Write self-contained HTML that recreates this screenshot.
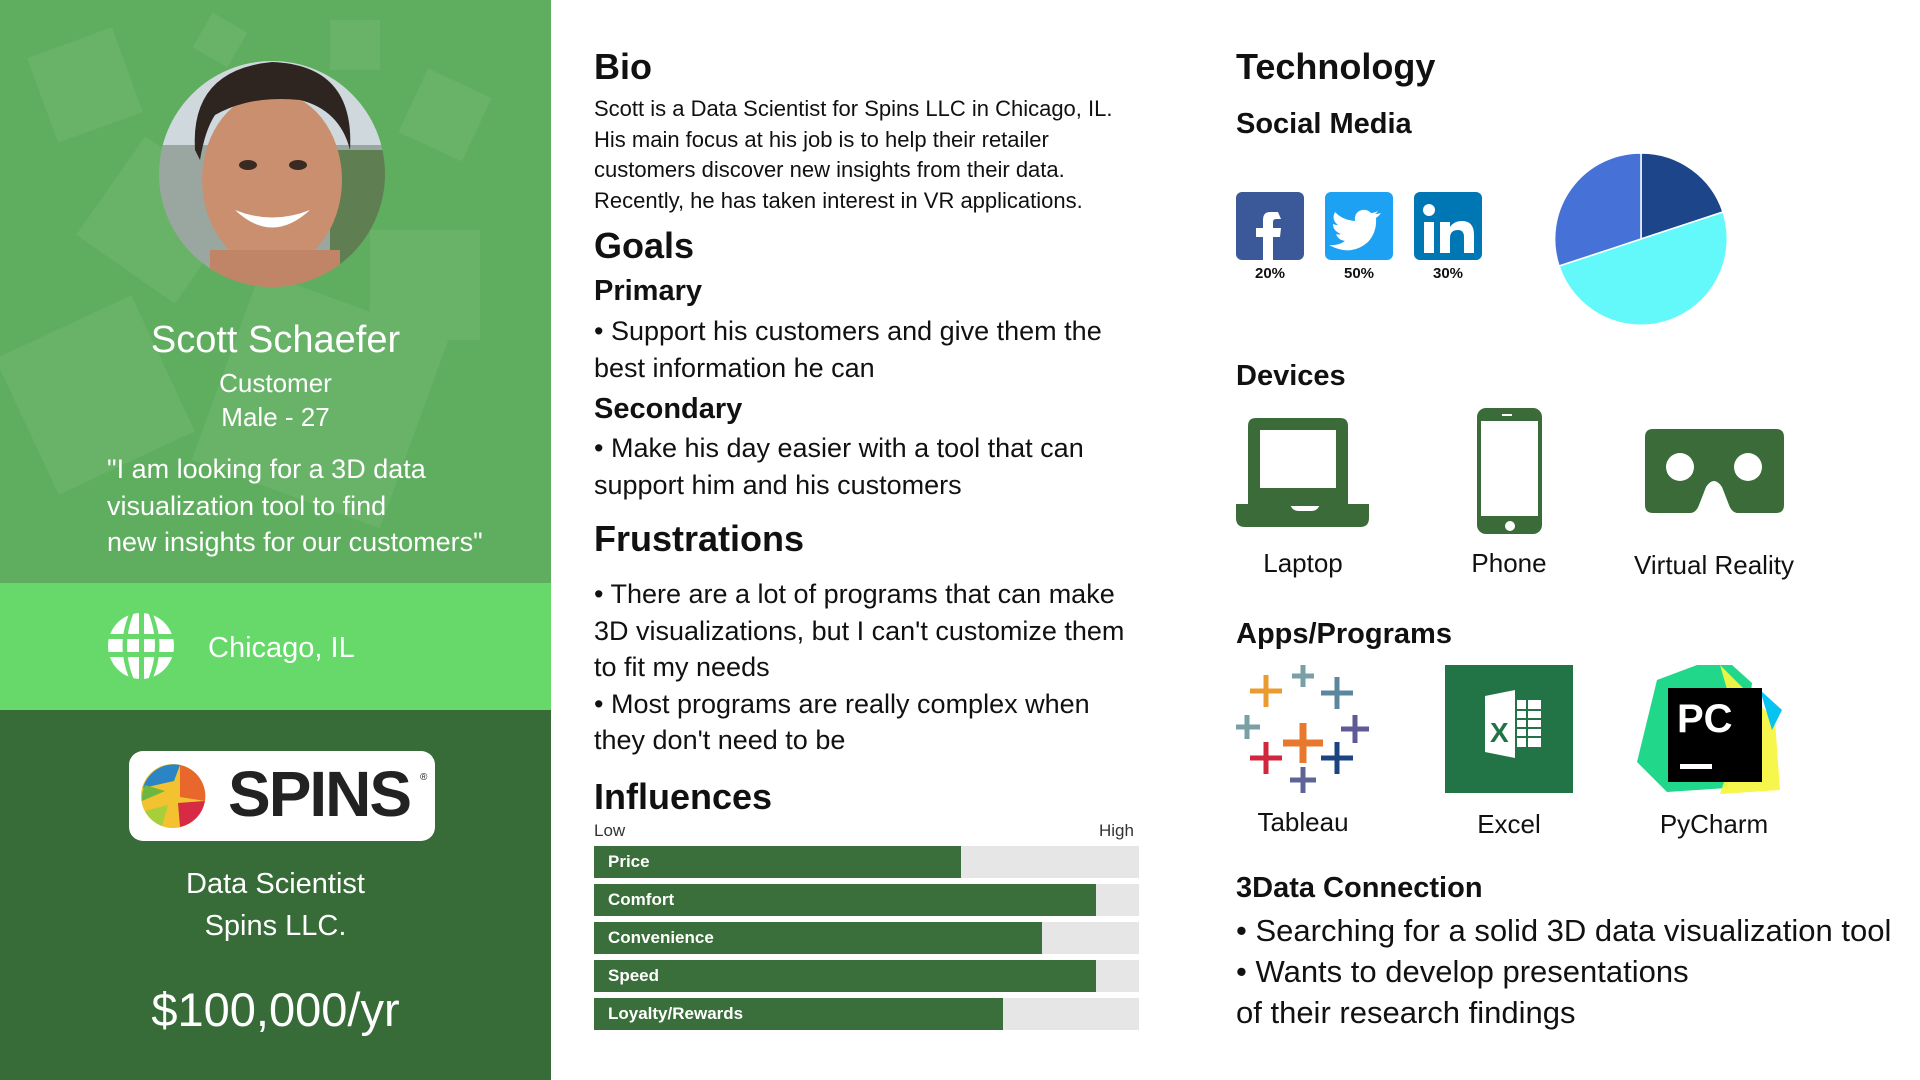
<!DOCTYPE html>
<html><head><meta charset="utf-8"><style>
*{margin:0;padding:0;box-sizing:border-box}
body{width:1920px;height:1080px;position:relative;overflow:hidden;background:#fff;font-family:"Liberation Sans",sans-serif;color:#111}
.a{position:absolute;white-space:nowrap}
.w{color:#fff}
.h1{font-size:36px;font-weight:bold;line-height:44px}
.h2{font-size:29px;font-weight:bold;line-height:36px}
.t{font-size:22px;line-height:30.5px}
.b{font-size:27px;line-height:36.5px}
.bar{position:absolute;left:594px;width:545px;height:32px;background:#e6e6e6}
.bar div{height:32px;background:#3a6e3a;color:#fff;font-size:17px;font-weight:bold;line-height:32px;padding-left:14px}
.c{text-align:center}
</style></head><body>
<svg class="a" style="left:0;top:0" width="1920" height="1080">
<rect x="0" y="0" width="551" height="583" fill="#5fae5f"/>
<g fill="#fff" opacity="0.07">
<rect x="40" y="40" width="90" height="90" transform="rotate(-20 85 85)"/>
<rect x="330" y="20" width="50" height="50"/>
<rect x="410" y="80" width="70" height="70" transform="rotate(25 445 115)"/>
<rect x="100" y="160" width="120" height="120" transform="rotate(35 160 220)"/>
<rect x="370" y="230" width="110" height="110"/>
<rect x="20" y="320" width="150" height="150" transform="rotate(-25 95 395)"/>
<rect x="220" y="300" width="200" height="200" transform="rotate(20 320 400)"/>
<rect x="200" y="20" width="40" height="40" transform="rotate(30 220 40)"/>
</g>
<rect x="0" y="583" width="551" height="127" fill="#66d96a"/>
<rect x="0" y="710" width="551" height="370" fill="#376b38"/>
<defs><clipPath id="cp"><circle cx="272" cy="174" r="113"/></clipPath></defs>
<g clip-path="url(#cp)">
<rect x="150" y="55" width="250" height="240" fill="#9aa7a0"/>
<rect x="150" y="55" width="250" height="90" fill="#cfd9dd"/>
<rect x="330" y="150" width="80" height="140" fill="#5f7e52"/>
<ellipse cx="272" cy="180" rx="70" ry="88" fill="#c98f6f"/>
<path d="M195 150 Q190 70 272 62 Q355 65 350 150 Q340 110 300 100 Q250 95 215 115 Q205 130 200 160Z" fill="#2e2520"/>
<rect x="210" y="250" width="130" height="60" fill="#c08566"/>
<path d="M235 210 Q272 245 310 210 Q272 225 235 210Z" fill="#fff"/>
<ellipse cx="248" cy="165" rx="9" ry="5" fill="#3a2a22"/><ellipse cx="298" cy="165" rx="9" ry="5" fill="#3a2a22"/>
</g>
<circle cx="141" cy="646" r="33" fill="#fff"/>
<g fill="#66d96a">
<rect x="104" y="634" width="76" height="5"/><rect x="104" y="652" width="76" height="5"/>
<path d="M130 612 Q115 646 130 680 L134 680 Q120 646 134 612Z"/>
<path d="M152 612 Q167 646 152 680 L148 680 Q162 646 148 612Z"/>
<rect x="139" y="610" width="5" height="72"/>
</g>
<rect x="129" y="751" width="306" height="90" rx="14" fill="#fff"/>
<g transform="translate(140,763)">
<circle cx="33" cy="33" r="32" fill="#f2c230"/>
<path d="M3 25 A32 32 0 0 1 40 2 L34 18 Z" fill="#2b84c6"/>
<path d="M2 38 A32 32 0 0 1 5 22 L25 28 Z" fill="#6cb73f"/>
<path d="M40 2 A32 32 0 0 1 65 38 L40 34Z" fill="#e8672a"/>
<path d="M65 38 A32 32 0 0 1 40 64 L38 40Z" fill="#d62a45"/>
<path d="M5 48 A32 32 0 0 0 22 63 L28 42Z" fill="#a6cf3a"/>
</g>
<text x="228" y="816" font-family="Liberation Sans" font-weight="bold" font-size="64" fill="#222" letter-spacing="-2">SPINS</text>
<text x="420" y="780" font-size="10" fill="#222" font-family="Liberation Sans">®</text>
<rect x="1236" y="192" width="68" height="68" rx="6" fill="#3b5998"/>
<path d="M1278 212 h-8 q-7 0 -7 8 v8 h-7 v9 h7 v23 h10 v-23 h7 l1 -9 h-8 v-6 q0 -3 3 -3 h5z" fill="#fff"/>
<rect x="1325" y="192" width="68" height="68" rx="6" fill="#1da1f2"/>
<path d="M1378 211 q-4 2 -7 2 q-4 -4 -9 -3 q-8 2 -7 11 q-13 -1 -20 -9 q-4 8 3 13 q-3 0 -5 -1 q0 7 8 10 q-3 1 -5 0 q2 6 9 7 q-7 5 -16 4 q22 12 39 -3 q9 -10 8 -24 q3 -2 5 -5 q-3 1 -6 1 q3 -2 3 -4z" fill="#fff"/>
<rect x="1414" y="192" width="68" height="68" rx="6" fill="#0077b5"/>
<g fill="#fff"><rect x="1424" y="222" width="10" height="31"/><circle cx="1429" cy="210" r="6"/>
<path d="M1440 222 h10 v5 q4 -6 12 -6 q12 0 12 14 v18 h-10 v-16 q0 -7 -6 -7 q-8 0 -8 8 v15 h-10z"/></g>
<path d="M1641 239 L1641 153 A86 86 0 0 1 1723 212Z" fill="#1d4589" stroke="#fff" stroke-width="1.5"/>
<path d="M1641 239 L1723 212 A86 86 0 0 1 1559 266Z" fill="#63f8fa" stroke="#fff" stroke-width="1.5"/>
<path d="M1641 239 L1559 266 A86 86 0 0 1 1641 153Z" fill="#4672d8" stroke="#fff" stroke-width="1.5"/>
<g fill="#3a6b38">
<path d="M1256 418 h84 q8 0 8 8 v80 h-100 v-80 q0 -8 8 -8z"/>
<rect x="1260" y="430" width="76" height="58" fill="#fff"/>
<path d="M1236 504 h54 q2 7 9 7 h12 q7 0 9 -7 h49 v14 q0 9 -9 9 h-115 q-9 0 -9 -9z"/>
<rect x="1477" y="408" width="65" height="126" rx="9"/>
<rect x="1481" y="421" width="57" height="95" fill="#fff"/>
<rect x="1502" y="414" width="10" height="2" fill="#fff"/>
<circle cx="1510" cy="526" r="5" fill="#fff"/>
<path d="M1653 429 H1776 Q1784 429 1784 437 V505 Q1784 513 1776 513 H1738 Q1732 513 1729 505 L1722 487 Q1714 475 1706 487 L1699 505 Q1696 513 1690 513 H1653 Q1645 513 1645 505 V437 Q1645 429 1653 429Z"/>
<circle cx="1680" cy="467" r="14" fill="#fff"/><circle cx="1748" cy="467" r="14" fill="#fff"/>
</g>
<g stroke-width="5">
<path d="M1303 723 v40 M1283 743 h40" stroke="#e8782d" stroke-width="7"/>
<path d="M1266 675 v32 M1250 691 h32" stroke="#eb9b2f"/>
<path d="M1337 677 v32 M1321 693 h32" stroke="#5b879e"/>
<path d="M1303 665 v22 M1292 676 h22" stroke="#7a9fa4"/>
<path d="M1247 715 v24 M1236 727 h24" stroke="#7a9fa4"/>
<path d="M1355 715 v28 M1341 729 h28" stroke="#5e5a96"/>
<path d="M1266 742 v32 M1250 758 h32" stroke="#d0263e"/>
<path d="M1337 742 v32 M1321 758 h32" stroke="#1d4482"/>
<path d="M1303 767 v26 M1290 780 h26" stroke="#5e6595"/>
</g>
<rect x="1445" y="665" width="128" height="128" fill="#227446"/>
<path d="M1485 696 l30 -6 v68 l-30 -6z" fill="#fff"/>
<rect x="1517" y="700" width="24" height="47" fill="#fff"/>
<g stroke="#227446" stroke-width="2"><path d="M1517 710 h24 M1517 719 h24 M1517 728 h24 M1517 737 h24 M1527 700 v47"/></g>
<text x="1490" y="742" font-family="Liberation Sans" font-weight="bold" font-size="28" fill="#227446">X</text>
<path d="M1657 680 l40 -15 l35 0 l20 18 l-5 45 l-20 60 l-60 4 l-30 -30z" fill="#21d789"/>
<path d="M1720 665 l55 55 l5 70 l-60 4 l20 -60z" fill="#f5f542" opacity="0.95"/>
<path d="M1760 690 l22 20 l-10 20z" fill="#07c3f2"/>
<rect x="1668" y="688" width="94" height="94" fill="#000"/>
<text x="1677" y="732" font-family="Liberation Sans" font-weight="bold" font-size="40" fill="#fff">PC</text>
<rect x="1680" y="764" width="32" height="5" fill="#fff"/>
</svg>

<div class="a w c" style="left:0;width:551px;top:318px;font-size:38px;line-height:44px">Scott Schaefer</div>
<div class="a w c" style="left:0;width:551px;top:367px;font-size:26px;line-height:32px">Customer</div>
<div class="a w c" style="left:0;width:551px;top:401px;font-size:26px;line-height:32px">Male - 27</div>
<div class="a w" style="left:107px;top:451px;font-size:27px;line-height:36.5px">"I am looking for a 3D data<br>visualization tool to find<br>new insights for our customers"</div>
<div class="a w" style="left:208px;top:630px;font-size:29px;line-height:36px">Chicago, IL</div>
<div class="a w c" style="left:0;width:551px;top:866px;font-size:29px;line-height:36px">Data Scientist</div>
<div class="a w c" style="left:0;width:551px;top:908px;font-size:29px;line-height:36px">Spins LLC.</div>
<div class="a w c" style="left:0;width:551px;top:980px;font-size:47px;line-height:60px">$100,000/yr</div>

<div class="a h1" style="left:594px;top:45px">Bio</div>
<div class="a t" style="left:594px;top:94px">Scott is a Data Scientist for Spins LLC in Chicago, IL.<br>His main focus at his job is to help their retailer<br>customers discover new insights from their data.<br>Recently, he has taken interest in VR applications.</div>
<div class="a h1" style="left:594px;top:224px">Goals</div>
<div class="a h2" style="left:594px;top:273px">Primary</div>
<div class="a b" style="left:594px;top:313px">• Support his customers and give them the<br>best information he can</div>
<div class="a h2" style="left:594px;top:391px">Secondary</div>
<div class="a b" style="left:594px;top:430px">• Make his day easier with a tool that can<br>support him and his customers</div>
<div class="a h1" style="left:594px;top:517px">Frustrations</div>
<div class="a b" style="left:594px;top:576px">• There are a lot of programs that can make<br>3D visualizations, but I can't customize them<br>to fit my needs<br>• Most programs are really complex when<br>they don't need to be</div>
<div class="a h1" style="left:594px;top:775px">Influences</div>
<div class="a" style="left:594px;top:821px;font-size:17px;color:#333">Low</div>
<div class="a" style="left:1099px;top:821px;font-size:17px;color:#333">High</div>
<div class="bar" style="top:846px"><div style="width:367px">Price</div></div>
<div class="bar" style="top:884px"><div style="width:502px">Comfort</div></div>
<div class="bar" style="top:922px"><div style="width:448px">Convenience</div></div>
<div class="bar" style="top:960px"><div style="width:502px">Speed</div></div>
<div class="bar" style="top:998px"><div style="width:409px">Loyalty/Rewards</div></div>

<div class="a h1" style="left:1236px;top:45px">Technology</div>
<div class="a h2" style="left:1236px;top:106px">Social Media</div>
<div class="a c" style="left:1236px;width:68px;top:265px;font-size:15px;font-weight:bold">20%</div>
<div class="a c" style="left:1325px;width:68px;top:265px;font-size:15px;font-weight:bold">50%</div>
<div class="a c" style="left:1414px;width:68px;top:265px;font-size:15px;font-weight:bold">30%</div>
<div class="a h2" style="left:1236px;top:358px">Devices</div>
<div class="a c" style="left:1203px;width:200px;top:548px;font-size:26px">Laptop</div>
<div class="a c" style="left:1409px;width:200px;top:548px;font-size:26px">Phone</div>
<div class="a c" style="left:1594px;width:240px;top:550px;font-size:26px">Virtual Reality</div>
<div class="a h2" style="left:1236px;top:616px">Apps/Programs</div>
<div class="a c" style="left:1203px;width:200px;top:807px;font-size:26px">Tableau</div>
<div class="a c" style="left:1409px;width:200px;top:809px;font-size:26px">Excel</div>
<div class="a c" style="left:1614px;width:200px;top:809px;font-size:26px">PyCharm</div>
<div class="a h2" style="left:1236px;top:870px">3Data Connection</div>
<div class="a" style="left:1236px;top:910px;font-size:31px;line-height:41px">• Searching for a solid 3D data visualization tool<br>• Wants to develop presentations<br>of their research findings</div>
</body></html>
